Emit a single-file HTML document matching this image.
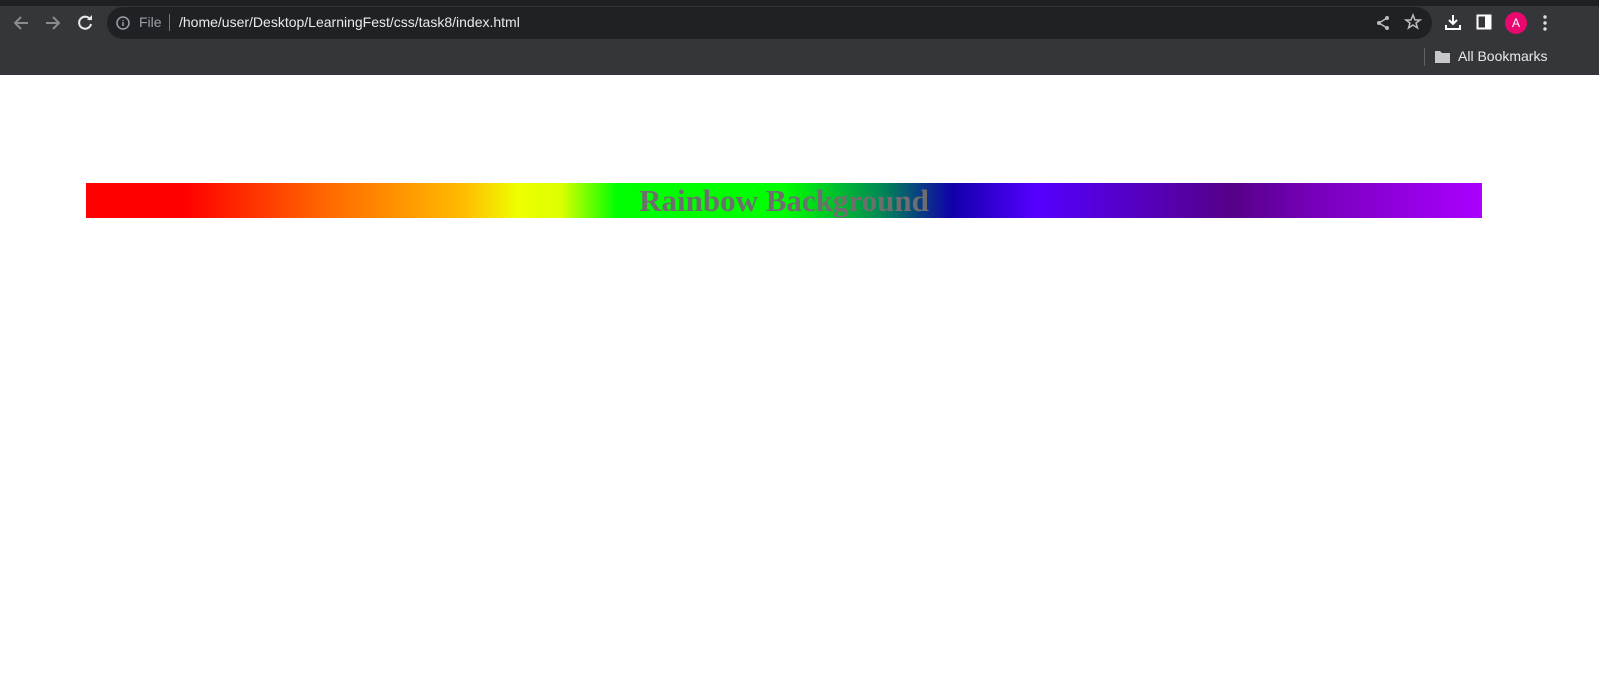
<!DOCTYPE html>
<html><head><meta charset="utf-8"><style>
*{margin:0;padding:0;box-sizing:border-box}
body{width:1599px;height:686px;background:#fff;font-family:"Liberation Sans",sans-serif;overflow:hidden;position:relative}
.top{position:absolute;left:0;top:0;width:1599px;height:6px;background:#1f2023}
.tb{position:absolute;left:0;top:6px;width:1599px;height:69px;background:#35363a}
.omni{position:absolute;left:107px;top:7px;width:1325px;height:32px;border-radius:16px;background:#202124}
.url{position:absolute;left:179px;top:14px;color:#e8eaed;font-size:14px}
.file{position:absolute;left:139px;top:14px;color:#9aa0a6;font-size:14px}
.sep{position:absolute;left:169px;top:14px;width:1px;height:17px;background:#777}
.bm{position:absolute;left:1458px;top:48px;color:#e8eaed;font-size:14px}
.bar{position:absolute;left:86px;top:183px;width:1396px;height:35px;
background:linear-gradient(to right,#f00 0%,#f00 7%,#f60 17%,#fb0 27%,#ef0 31%,#df0 34%,#0f0 38%,#0f0 50%,#085 57%,#10a 62%,#50f 68%,#50a 78%,#508 82%,#70b 88%,#a0f 100%);
text-align:center;font-family:"Liberation Serif",serif;font-weight:bold;font-size:31px;line-height:35px;color:#6e6e6e}
svg{position:absolute}
</style></head><body>
<div class="top"></div>
<div class="tb"></div>
<svg style="left:10px;top:12px" width="22" height="22" viewBox="0 0 22 22"><path d="M18 11H5M11 5l-6 6 6 6" stroke="#8a8b8e" stroke-width="2" fill="none"/></svg>
<svg style="left:42px;top:12px" width="22" height="22" viewBox="0 0 22 22"><path d="M4 11h13M11 5l6 6-6 6" stroke="#8a8b8e" stroke-width="2" fill="none"/></svg>
<svg style="left:74px;top:12px" width="22" height="22" viewBox="0 0 22 22"><path d="M16.5 8A6 6 0 1 0 17 12" stroke="#e8eaed" stroke-width="2" fill="none"/><path d="M13 8h5V3z" fill="#e8eaed"/></svg>
<div class="omni"></div>
<svg style="left:115px;top:15px" width="16" height="16" viewBox="0 0 16 16"><circle cx="8" cy="8" r="6" stroke="#9aa0a6" stroke-width="1.5" fill="none"/><path d="M8 7v4M8 5v1" stroke="#9aa0a6" stroke-width="1.5"/></svg>
<div class="file">File</div><div class="sep"></div>
<div class="url">/home/user/Desktop/LearningFest/css/task8/index.html</div>
<svg style="left:1374px;top:14px" width="18" height="18" viewBox="0 0 18 18"><circle cx="13" cy="4" r="2" fill="#bbb"/><circle cx="5" cy="9" r="2" fill="#bbb"/><circle cx="13" cy="14" r="2" fill="#bbb"/><path d="M13 4L5 9l8 5" stroke="#bbb" stroke-width="1.5" fill="none"/></svg>
<svg style="left:1404px;top:13px" width="18" height="18" viewBox="0 0 18 18"><path d="M9 2l2 5h5l-4 3 1.5 5L9 12l-4.5 3L6 10 2 7h5z" stroke="#bbb" stroke-width="1.5" fill="none"/></svg>
<svg style="left:1444px;top:13px" width="18" height="18" viewBox="0 0 18 18"><path d="M9 2v9M5 7l4 4 4-4M2 12v4h14v-4" stroke="#fff" stroke-width="2" fill="none"/></svg>
<svg style="left:1476px;top:14px" width="17" height="17" viewBox="0 0 17 17"><rect x="1.5" y="1.5" width="13" height="13" stroke="#fff" stroke-width="2" fill="none"/><rect x="9" y="2" width="5" height="12" fill="#fff"/></svg>
<div style="position:absolute;left:1505px;top:12px;width:22px;height:22px;border-radius:50%;background:#e8086f;color:#fff;font-size:12px;text-align:center;line-height:22px">A</div>
<svg style="left:1542px;top:14px" width="6" height="18" viewBox="0 0 6 18"><circle cx="3" cy="3" r="1.7" fill="#ddd"/><circle cx="3" cy="9" r="1.7" fill="#ddd"/><circle cx="3" cy="15" r="1.7" fill="#ddd"/></svg>
<div style="position:absolute;left:1424px;top:48px;width:1px;height:18px;background:#5f6368"></div>
<svg style="left:1435px;top:50px" width="15" height="13" viewBox="0 0 15 13"><path d="M0 1h5l2 2h8v10H0z" fill="#c8c8c8"/></svg>
<div class="bm">All Bookmarks</div>
<div class="bar">Rainbow Background</div>
</body></html>
